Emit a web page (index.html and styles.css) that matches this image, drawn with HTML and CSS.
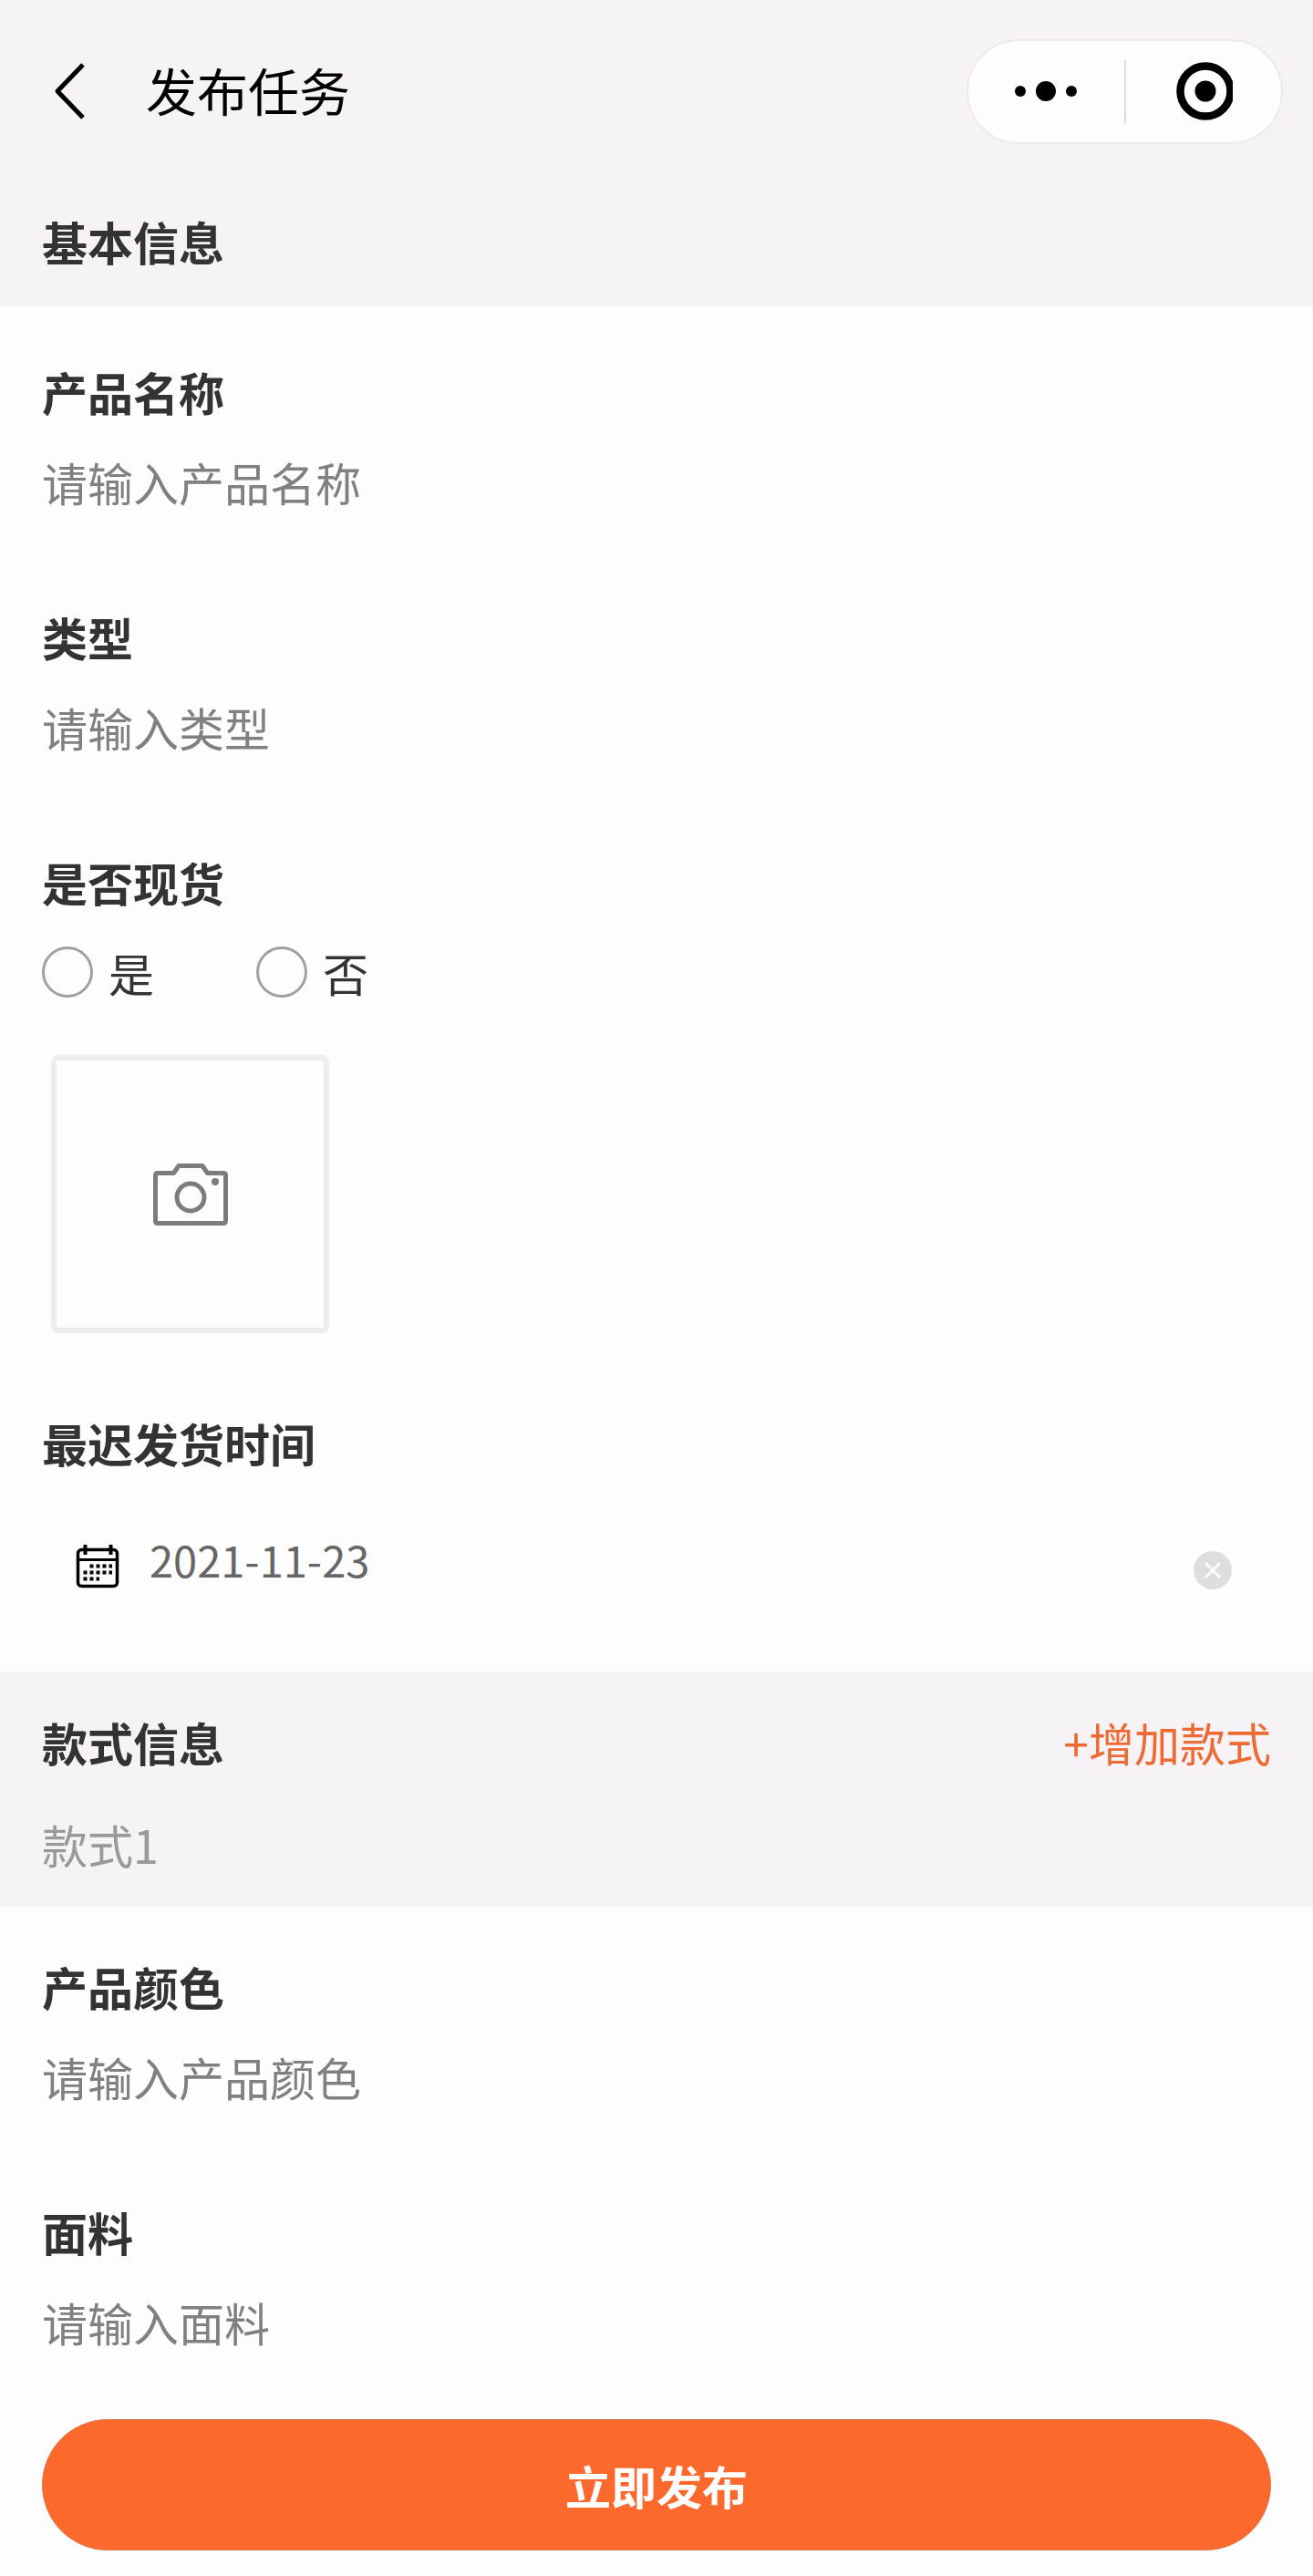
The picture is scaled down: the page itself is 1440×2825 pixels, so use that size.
FILE: index.html
```html
<!DOCTYPE html>
<html lang="zh-CN">
<head>
  <meta charset="utf-8">
  <meta name="viewport" content="width=device-width, initial-scale=1">
  <title>发布任务</title>
  <link rel="stylesheet" href="styles.css">
</head>
<body>
  <header class="navbar">
    <button class="icon-button back" type="button" aria-label="返回">
      <svg width="40" height="64" viewBox="0 0 40 64" fill="none" stroke="#000" stroke-width="5"><path d="M34 3 6 32 34 61" stroke-linejoin="round"/></svg>
    </button>
    <h1 class="navbar-title">发布任务</h1>
    <div class="capsule">
      <button class="icon-button capsule-button" type="button" aria-label="更多">
        <svg width="72" height="24" viewBox="0 0 72 24"><circle cx="8" cy="12" r="6"/><circle cx="36" cy="12" r="11"/><circle cx="64" cy="12" r="6"/></svg>
      </button>
      <span class="capsule-divider"></span>
      <button class="icon-button capsule-button" type="button" aria-label="关闭">
        <svg width="64" height="64" viewBox="0 0 64 64"><circle cx="34" cy="32" r="27.5" fill="none" stroke="#000" stroke-width="8.5"/><circle cx="34" cy="32" r="11.5"/></svg>
      </button>
    </div>
  </header>

  <form class="form">
    <div class="section-head section-head-basic">
      <h2 class="heading">基本信息</h2>
    </div>

    <section class="panel panel-basic">
      <div class="field">
        <label class="heading" for="name">产品名称</label>
        <input class="text-input" id="name" type="text" placeholder="请输入产品名称">
      </div>
      <div class="field">
        <label class="heading" for="type">类型</label>
        <input class="text-input" id="type" type="text" placeholder="请输入类型">
      </div>
      <fieldset class="field stock">
        <legend class="heading">是否现货</legend>
        <div class="options">
          <label class="option"><input class="radio" type="radio" name="stock" value="yes">是</label>
          <label class="option"><input class="radio" type="radio" name="stock" value="no">否</label>
        </div>
      </fieldset>
      <button class="icon-button upload" type="button" aria-label="上传图片">
        <svg width="84" height="72" viewBox="0 0 84 72" fill="none" stroke="#7c7c7c" stroke-width="5" stroke-linejoin="round"><path d="M6 12.500H23.500L29 4.500H55L60.500 12.500H78Q80.500 12.500 80.500 15V64.500Q80.500 67.500 78 67.500H6Q3.500 67.500 3.500 64.500V15Q3.500 12.500 6 12.500Z"/><circle cx="42" cy="39" r="15"/><circle cx="69" cy="22" r="4" fill="#7c7c7c" stroke="none"/></svg>
      </button>
      <div class="date-field">
        <label class="heading" for="date">最迟发货时间</label>
        <div class="date-row">
          <svg width="56" height="56" viewBox="0 0 56 56" fill="none" stroke="#000"><rect x="5.500" y="9.500" width="43" height="40" rx="4" stroke-width="3.500"/><path d="M5 20.500H49" stroke-width="3"/><path d="M13.500 4V15M41.500 4V15" stroke-width="4"/><path d="M18.500 27.500H43M11.500 34.500H43M11.500 41.500H29" stroke-width="4" stroke-dasharray="4 3"/></svg>
          <input class="text-input date-input" id="date" type="text" value="2021-11-23">
          <button class="icon-button clear" type="button" aria-label="清除日期">
            <svg width="48" height="48" viewBox="0 0 48 48"><circle cx="24" cy="24" r="21" fill="#dedede"/><path d="M16 16 32 32M32 16 16 32" stroke="#fdfdfd" stroke-width="3"/></svg>
          </button>
        </div>
      </div>
    </section>

    <div class="section-head section-head-style">
      <div class="section-row">
        <h2 class="heading">款式信息</h2>
        <button class="add-style" type="button">+增加款式</button>
      </div>
      <p class="style-name">款式1</p>
    </div>

    <section class="panel panel-style">
      <div class="field">
        <label class="heading" for="color">产品颜色</label>
        <input class="text-input" id="color" type="text" placeholder="请输入产品颜色">
      </div>
      <div class="field">
        <label class="heading" for="fabric">面料</label>
        <input class="text-input" id="fabric" type="text" placeholder="请输入面料">
      </div>
    </section>

    <div class="actions">
      <button class="submit" type="submit">立即发布</button>
    </div>
  </form>
</body>
</html>
```

FILE: styles.css
```css
* {
  box-sizing: border-box;
}

body {
  margin: 0;
  background: #fdfdfd;
  color: #333;
  font-family: "Noto Sans CJK SC", sans-serif;
  font-size: 50px;
  line-height: 72px;
}

button,
input {
  margin: 0;
  padding: 0;
  border: 0;
  background: none;
  color: inherit;
  font: inherit;
}

button {
  cursor: pointer;
}

svg {
  display: block;
  flex: none;
}

.icon-button {
  display: flex;
  align-items: center;
  justify-content: center;
}

/* Top bar */
.navbar {
  display: flex;
  align-items: center;
  height: 200px;
  padding: 0 33px 0 57px;
  background: #f6f2f6;
}

.navbar-title {
  flex: 1;
  margin: 0 0 4px 63px;
  color: #000;
  font-size: 56px;
  font-weight: 400;
}

.capsule {
  display: flex;
  align-items: center;
  width: 347px;
  height: 115px;
  border: 2px solid #ebebeb;
  border-radius: 58px;
  background: #fdfdfd;
}

.capsule-button {
  flex: 1;
  height: 100%;
}

.capsule-divider {
  width: 2px;
  height: 69px;
  background: #dcdcdc;
}

/* Section bands */
.section-head {
  background: #f6f2f6;
}

.section-head-basic {
  padding: 28px 46px 36px;
}

.section-head-style {
  display: flex;
  flex-direction: column;
  gap: 40px;
  padding: 41px 46px 33px;
}

.section-row {
  display: flex;
  justify-content: space-between;
}

.heading {
  display: block;
  margin: 0;
  padding: 0;
  font-size: 50px;
  font-weight: 700;
  line-height: 72px;
}

.add-style {
  color: #ed6a32;
}

.style-name {
  margin: 0;
  color: #999;
}

/* Fields */
.panel {
  display: flex;
  flex-direction: column;
}

.panel-basic {
  gap: 98px;
  padding: 57px 46px 87px;
}

.panel-style {
  gap: 98px;
  padding: 51px 46px 71px;
}

.field {
  display: flex;
  flex-direction: column;
  gap: 27px;
}

.text-input {
  width: 100%;
  height: 72px;
  outline: 0;
}

.text-input::placeholder {
  color: #808080;
  opacity: 1;
}

.stock {
  display: block;
  min-width: 0;
  margin: 0;
  padding: 0;
  border: 0;
}

.options {
  display: flex;
  gap: 112px;
  padding-top: 27px;
}

.option {
  display: flex;
  align-items: center;
  gap: 17px;
}

.radio {
  width: 56px;
  height: 56px;
  border: 3px solid #a0a0a0;
  border-radius: 50%;
  appearance: none;
}

.radio:checked {
  border: 16px solid #fd682c;
}

.upload {
  width: 305px;
  height: 305px;
  margin: -43px 0 -14px 10px;
  border: 6px solid #eeecee;
  border-radius: 8px;
}

.date-field {
  display: flex;
  flex-direction: column;
  gap: 56px;
}

.date-row {
  display: flex;
  align-items: flex-end;
  padding: 0 40px 0 34px;
}

.date-input {
  flex: 1;
  min-width: 0;
  margin-left: 28px;
  color: #666;
  font-size: 47px;
}

/* Submit */
.actions {
  padding: 0 46px 27px;
}

.submit {
  display: block;
  width: 100%;
  height: 144px;
  border: 1px solid #d9774a;
  border-radius: 72px;
  background: #fd682c;
  color: #fff;
  font-weight: 700;
}
```
